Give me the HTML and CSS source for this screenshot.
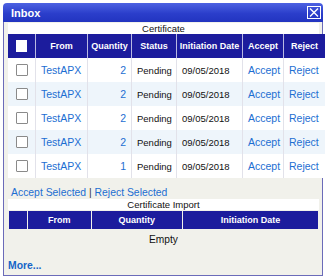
FILE: index.html
```html
<!DOCTYPE html>
<html>
<head>
	<title>Inbox</title>
	<link rel="stylesheet" href="styles.css">
</head>
<body>
<div class="window">
	<div class="titlebar">
		<span class="title">Inbox</span>
		<span class="close">
			<svg width="14" height="13" viewBox="0 0 14 13">
				<rect x="0.5" y="0.5" width="13" height="12" fill="none" stroke="#fff"/>
				<path d="M3 2.5 L11 10.5 M11 2.5 L3 10.5" stroke="#fff" stroke-width="1.4"/>
			</svg>
		</span>
	</div>
	<div class="content">
		<div class="caption">Certificate</div>
		<table class="grid cert">
			<tr>
				<th class="c-chk"><span class="box head-box"></span></th>
				<th class="c-from">From</th>
				<th class="c-qty">Quantity</th>
				<th class="c-status">Status</th>
				<th class="c-date">Initiation Date</th>
				<th class="c-acc">Accept</th>
				<th class="c-rej">Reject</th>
			</tr>
			<tr>
				<td class="chk"><span class="box"></span></td>
				<td><a href="#">TestAPX</a></td>
				<td class="num"><a href="#">2</a></td>
				<td>Pending</td>
				<td>09/05/2018</td>
				<td><a href="#">Accept</a></td>
				<td><a href="#">Reject</a></td>
			</tr>
			<tr class="alt">
				<td class="chk"><span class="box"></span></td>
				<td><a href="#">TestAPX</a></td>
				<td class="num"><a href="#">2</a></td>
				<td>Pending</td>
				<td>09/05/2018</td>
				<td><a href="#">Accept</a></td>
				<td><a href="#">Reject</a></td>
			</tr>
			<tr>
				<td class="chk"><span class="box"></span></td>
				<td><a href="#">TestAPX</a></td>
				<td class="num"><a href="#">2</a></td>
				<td>Pending</td>
				<td>09/05/2018</td>
				<td><a href="#">Accept</a></td>
				<td><a href="#">Reject</a></td>
			</tr>
			<tr class="alt">
				<td class="chk"><span class="box"></span></td>
				<td><a href="#">TestAPX</a></td>
				<td class="num"><a href="#">2</a></td>
				<td>Pending</td>
				<td>09/05/2018</td>
				<td><a href="#">Accept</a></td>
				<td><a href="#">Reject</a></td>
			</tr>
			<tr>
				<td class="chk"><span class="box"></span></td>
				<td><a href="#">TestAPX</a></td>
				<td class="num"><a href="#">1</a></td>
				<td>Pending</td>
				<td>09/05/2018</td>
				<td><a href="#">Accept</a></td>
				<td><a href="#">Reject</a></td>
			</tr>
		</table>
		<div class="bulk"><a href="#">Accept Selected</a> | <a href="#">Reject Selected</a></div>
		<div class="caption">Certificate Import</div>
		<table class="grid import">
			<tr>
				<th class="i-chk"></th>
				<th class="i-from">From</th>
				<th class="i-qty">Quantity</th>
				<th class="i-date">Initiation Date</th>
			</tr>
		</table>
		<div class="empty">Empty</div>
		<a class="more" href="#">More...</a>
	</div>
</div>
</body>
</html>
```

FILE: styles.css
```css
body {
	margin: 0;
	font-family: "Liberation Sans", Arial, sans-serif;
	background: #fff;
}
a {
	color: #1c6ed2;
	text-decoration: none;
}
.window {
	margin: 3px 0 0 3px;
	width: 320px;
}
.titlebar {
	height: 19px;
	display: flex;
	align-items: center;
	justify-content: space-between;
	padding: 0 2px 0 8px;
	border-radius: 4px 4px 0 0;
	background: linear-gradient(#4d62e2, #2b3ecb 55%, #2234c0);
}
.title {
	color: #fff;
	font-weight: bold;
	font-size: 11px;
}
.close {
	display: flex;
}
.close svg {
	display: block;
}
.content {
	background: #f1f1eb;
	border: 1px solid #6b6bb9;
	border-top: 0;
	padding: 1px 3px 2px 4px;
}
.caption {
	background: #fff;
	height: 11px;
	line-height: 11px;
	font-size: 9.5px;
	text-align: center;
	color: #111;
}
.grid {
	width: 311px;
	table-layout: fixed;
	border-collapse: collapse;
}
.grid th {
	background: #1c1c9d;
	color: #fff;
	font-size: 9px;
	font-weight: bold;
	text-align: center;
	padding: 0;
	white-space: nowrap;
}
.cert th {
	height: 24px;
	border-left: 1px solid #b9b9e2;
}
.cert th:first-child {
	border-left: 0;
}
.cert td {
	height: 24px;
	padding: 0 0 0 5px;
	background: #fff;
	border-left: 1px solid #e2e2ea;
	font-size: 9.5px;
	color: #111;
	white-space: nowrap;
}
.cert td:first-child {
	border-left: 0;
}
.cert td a {
	font-size: 10.5px;
}
.cert .alt td {
	background: #eef5fb;
}
.cert .num {
	text-align: right;
	padding: 0 5px 0 0;
}
.cert .chk {
	padding: 0;
	text-align: center;
}
.box {
	display: inline-block;
	width: 10px;
	height: 10px;
	border: 1px solid #8a8a8a;
	border-radius: 1px;
	background: #fff;
	vertical-align: middle;
}
.head-box {
	width: 11px;
	height: 12px;
	border: 0;
	border-radius: 0;
}
.c-chk { width: 27px; }
.c-from { width: 51px; }
.c-qty { width: 43px; }
.c-status { width: 44px; }
.c-date { width: 65px; }
.c-acc { width: 40px; }
.c-rej { width: 41px; }
.bulk {
	margin-top: 9px;
	height: 12px;
	line-height: 12px;
	padding-left: 3px;
	font-size: 10.4px;
	color: #333;
}
.import {
	margin-top: 1px;
	border-collapse: separate;
	border-spacing: 1px 0;
}
.import th {
	height: 18px;
}
.i-chk { width: 18px; }
.i-from { width: 62px; }
.i-qty { width: 90px; }
.i-date { width: 134px; }
.empty {
	margin-top: 4px;
	line-height: 14px;
	text-align: center;
	font-size: 10.2px;
	color: #111;
}
.more {
	display: block;
	margin-top: 12px;
	line-height: 14px;
	font-size: 10.4px;
	font-weight: bold;
	color: #1565c8;
}
```
